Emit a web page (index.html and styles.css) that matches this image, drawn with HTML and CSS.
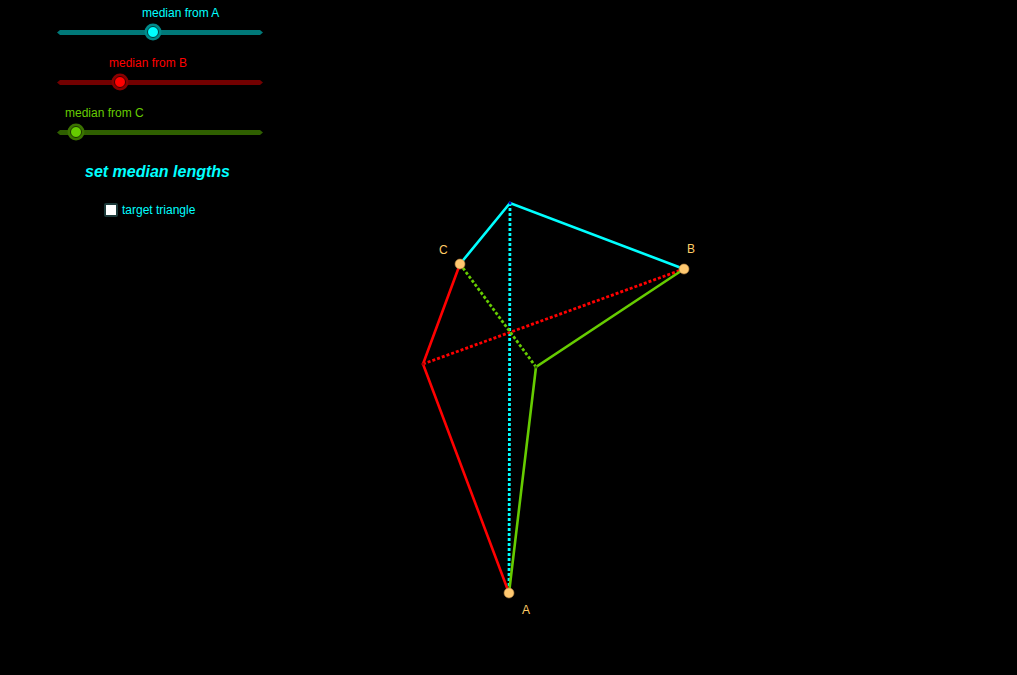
FILE: index.html
```html
<!DOCTYPE html>
<html>
<head>
<meta charset="utf-8">
<link rel="stylesheet" href="styles.css">
</head>
<body>
<div class="applet">
  <div class="panel">
    <div class="slider cyan">
      <div class="slabel" style="margin-left:142px">median from A</div>
      <div class="track"><span class="knob" style="left:89.5px"></span></div>
    </div>
    <div class="slider red">
      <div class="slabel" style="margin-left:109px">median from B</div>
      <div class="track"><span class="knob" style="left:56.5px"></span></div>
    </div>
    <div class="slider green">
      <div class="slabel" style="margin-left:65px">median from C</div>
      <div class="track"><span class="knob" style="left:12.5px"></span></div>
    </div>
    <div class="title">set median lengths</div>
    <label class="check"><span class="box"></span><span class="ctext">target triangle</span></label>
  </div>
  <svg class="canvas" width="1017" height="675" viewBox="0 0 1017 675">
    <g fill="none" stroke-linecap="butt">
      <polyline points="460,264 510,203 684,269" stroke="#00ffff" stroke-width="2.6"/>
      <line x1="510" y1="203" x2="509" y2="593" stroke="#00ffff" stroke-width="2.8" stroke-dasharray="3 2"/>
      <polyline points="460,264 423,364 509,593" stroke="#ff0000" stroke-width="2.6"/>
      <line x1="423" y1="364" x2="684" y2="269" stroke="#ff0000" stroke-width="2.8" stroke-dasharray="3 2"/>
      <polyline points="684,269 536,367 509,593" stroke="#66cc00" stroke-width="2.6"/>
      <line x1="460" y1="264" x2="536" y2="367" stroke="#66cc00" stroke-width="2.8" stroke-dasharray="3 2"/>
    </g>
    <circle cx="510" cy="203" r="1.5" fill="#0000cc"/>
    <circle cx="423" cy="364" r="1.5" fill="#aa0000"/>
    <circle cx="536" cy="367" r="1.5" fill="#336600"/>
    <g fill="#ffc870" stroke="#b08040" stroke-width="0.6">
      <circle cx="460" cy="264" r="5"/>
      <circle cx="684" cy="269" r="5"/>
      <circle cx="509" cy="593" r="5"/>
    </g>
    <g class="plabel">
      <text x="439" y="254">C</text>
      <text x="687" y="253">B</text>
      <text x="522" y="614">A</text>
    </g>
  </svg>
</div>
</body>
</html>
```

FILE: styles.css
```css
html, body {
  margin: 0;
  padding: 0;
  background: #000;
}
.applet {
  position: relative;
  width: 1017px;
  height: 675px;
  background: #000;
  overflow: hidden;
  font-family: "Liberation Sans", Arial, sans-serif;
}
.panel {
  display: flex;
  flex-direction: column;
  width: 300px;
}
.slider {
  height: 50px;
  display: flex;
  flex-direction: column;
}
.slabel {
  font-size: 12px;
  line-height: 14px;
  margin-top: 6px;
  white-space: nowrap;
}
.track {
  position: relative;
  margin-top: 10px;
  margin-left: 57px;
  width: 206px;
  height: 5px;
}
.track::before {
  content: "";
  position: absolute;
  inset: 0;
  clip-path: polygon(0 50%, 3px 0, calc(100% - 3px) 0, 100% 50%, calc(100% - 3px) 100%, 3px 100%);
  background: var(--track);
}
.knob {
  position: absolute;
  top: -4px;
  width: 10px;
  height: 10px;
  border-radius: 50%;
  background: var(--main);
  border: 1.5px solid var(--ring);
  box-shadow: 0 0 0 2.5px var(--halo);
}
.cyan { --main: #00ffff; --track: #007878; --ring: #003c3c; --halo: #008a8a; color: #00ffff; }
.red { --main: #ff0000; --track: #720000; --ring: #3a0000; --halo: #8a0000; color: #ff0000; }
.green { --main: #66cc00; --track: #2f5f00; --ring: #1a3300; --halo: #3b7300; color: #66cc00; }
.title {
  margin-top: 11px;
  margin-left: 85px;
  font-size: 16px;
  line-height: 21px;
  font-weight: bold;
  font-style: italic;
  color: #00ffff;
}
.check {
  display: flex;
  align-items: center;
  gap: 4px;
  margin-top: 21px;
  margin-left: 104px;
  height: 14px;
}
.box {
  width: 10px;
  height: 10px;
  background: #ffffff;
  border: 2px solid #1c3a3a;
  border-radius: 2px;
}
.ctext {
  font-size: 12px;
  line-height: 14px;
  color: #00ffff;
}
.canvas {
  position: absolute;
  left: 0;
  top: 0;
}
.plabel text {
  font-family: "Liberation Sans", Arial, sans-serif;
  font-size: 12px;
  fill: #ffcc66;
}
```
